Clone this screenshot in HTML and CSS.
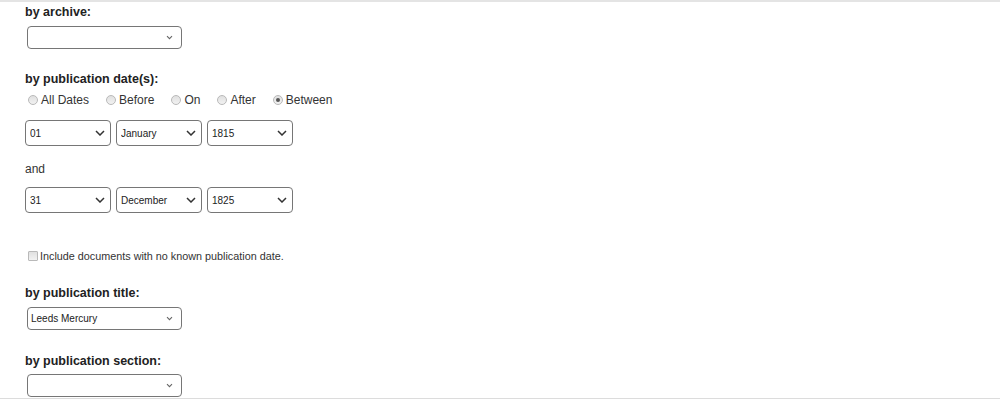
FILE: index.html
```html
<!DOCTYPE html>
<html lang="en">
<head>
    <meta charset="UTF-8">
    <meta name="viewport" content="width=device-width, initial-scale=1.0">
    <title>Search Filters</title>
    <link rel="stylesheet" href="styles.css">
</head>
<body>
    <div id="filters">
        <div class="section first">
            <h3>by archive:</h3>
            <select class="wide"><option></option></select>
        </div>
        <div class="section">
            <h3>by publication date(s):</h3>
            <div class="radios">
                <label><input type="radio" name="dates"> All Dates</label>
                <label><input type="radio" name="dates"> Before</label>
                <label><input type="radio" name="dates"> On</label>
                <label><input type="radio" name="dates"> After</label>
                <label><input type="radio" name="dates" checked> Between</label>
            </div>
            <div class="date-row">
                <select><option>01</option></select>
                <select><option>January</option></select>
                <select><option>1815</option></select>
            </div>
            <p class="and">and</p>
            <div class="date-row second">
                <select><option>31</option></select>
                <select><option>December</option></select>
                <select><option>1825</option></select>
            </div>
            <label class="nodate"><input type="checkbox"> Include documents with no known publication date.</label>
        </div>
        <div class="section">
            <h3>by publication title:</h3>
            <select class="wide"><option>Leeds Mercury</option></select>
        </div>
        <div class="section last">
            <h3>by publication section:</h3>
            <select class="wide"><option></option></select>
        </div>
    </div>
</body>
</html>
```

FILE: styles.css
```css
body {
    font-family: 'Liberation Sans', Arial, sans-serif;
    margin: 0;
    padding: 0;
    background-color: white;
    color: #222;
}
#filters {
    height: 399px;
    box-sizing: border-box;
    border-top: 2px solid #e4e4e4;
    border-bottom: 1px solid #dcdcdc;
    padding-left: 25px;
    overflow: hidden;
}
.section {
    margin-top: 23px;
}
.section.first {
    margin-top: 2px;
}
h3 {
    font-size: 12.5px;
    line-height: 16px;
    font-weight: bold;
    margin: 0 0 6px 0;
}
.section.last h3 {
    margin-bottom: 5px;
}
select {
    appearance: none;
    font-family: 'Liberation Sans', Arial, sans-serif;
    font-size: 10px;
    color: #222;
    background-color: white;
    background-repeat: no-repeat;
    border: 1px solid #767676;
    border-radius: 4px;
    margin: 0;
    box-sizing: border-box;
}
select.wide {
    width: 155px;
    height: 23px;
    margin-left: 2px;
    padding: 0 0 0 3px;
    background-image: url("data:image/svg+xml,%3Csvg xmlns='http://www.w3.org/2000/svg' width='7' height='5' viewBox='0 0 7 5'%3E%3Cpath d='M1 1.2l2.5 2.5 2.5-2.5' fill='none' stroke='%23666' stroke-width='1.1'/%3E%3C/svg%3E");
    background-position: right 8px center;
}
.radios {
    display: flex;
    gap: 17px;
    font-size: 12px;
    line-height: 16px;
    color: #333;
    margin-top: -1px;
}
.radios label {
    display: flex;
    align-items: center;
}
input[type="radio"] {
    appearance: none;
    width: 10px;
    height: 10px;
    margin: 0 3px 0 3px;
    border: 1px solid #b9b9b9;
    border-radius: 50%;
    background: linear-gradient(#e0e0e0, #f2f2f2);
    box-sizing: border-box;
    display: grid;
    place-items: center;
}
.radios label + label input[type="radio"] {
    margin-left: 0;
}
input[type="radio"]:checked::after {
    content: "";
    width: 4px;
    height: 4px;
    border-radius: 50%;
    background-color: #555;
}
.date-row {
    display: flex;
    gap: 5px;
    margin-top: 12px;
}
.date-row select {
    width: 86px;
    height: 26px;
    padding: 0 0 0 4px;
    background-image: url("data:image/svg+xml,%3Csvg xmlns='http://www.w3.org/2000/svg' width='10' height='6' viewBox='0 0 10 6'%3E%3Cpath d='M1 1l4 4 4-4' fill='none' stroke='%23333' stroke-width='1.5'/%3E%3C/svg%3E");
    background-position: right 5px center;
}
.and {
    font-size: 12px;
    line-height: 16px;
    color: #333;
    margin: 15px 0 0 0;
}
.date-row.second {
    margin-top: 10px;
}
.nodate {
    display: flex;
    align-items: center;
    font-size: 10.8px;
    line-height: 14px;
    color: #333;
    margin-top: 36px;
}
input[type="checkbox"] {
    appearance: none;
    width: 10px;
    height: 10px;
    margin: 0 2px 0 3px;
    border: 1px solid #b9b9b9;
    border-radius: 1px;
    background: linear-gradient(#e0e0e0, #f2f2f2);
    box-sizing: border-box;
}
.section + .section {
    margin-top: 22px;
}
.section.last {
    margin-top: 23px;
}
```
